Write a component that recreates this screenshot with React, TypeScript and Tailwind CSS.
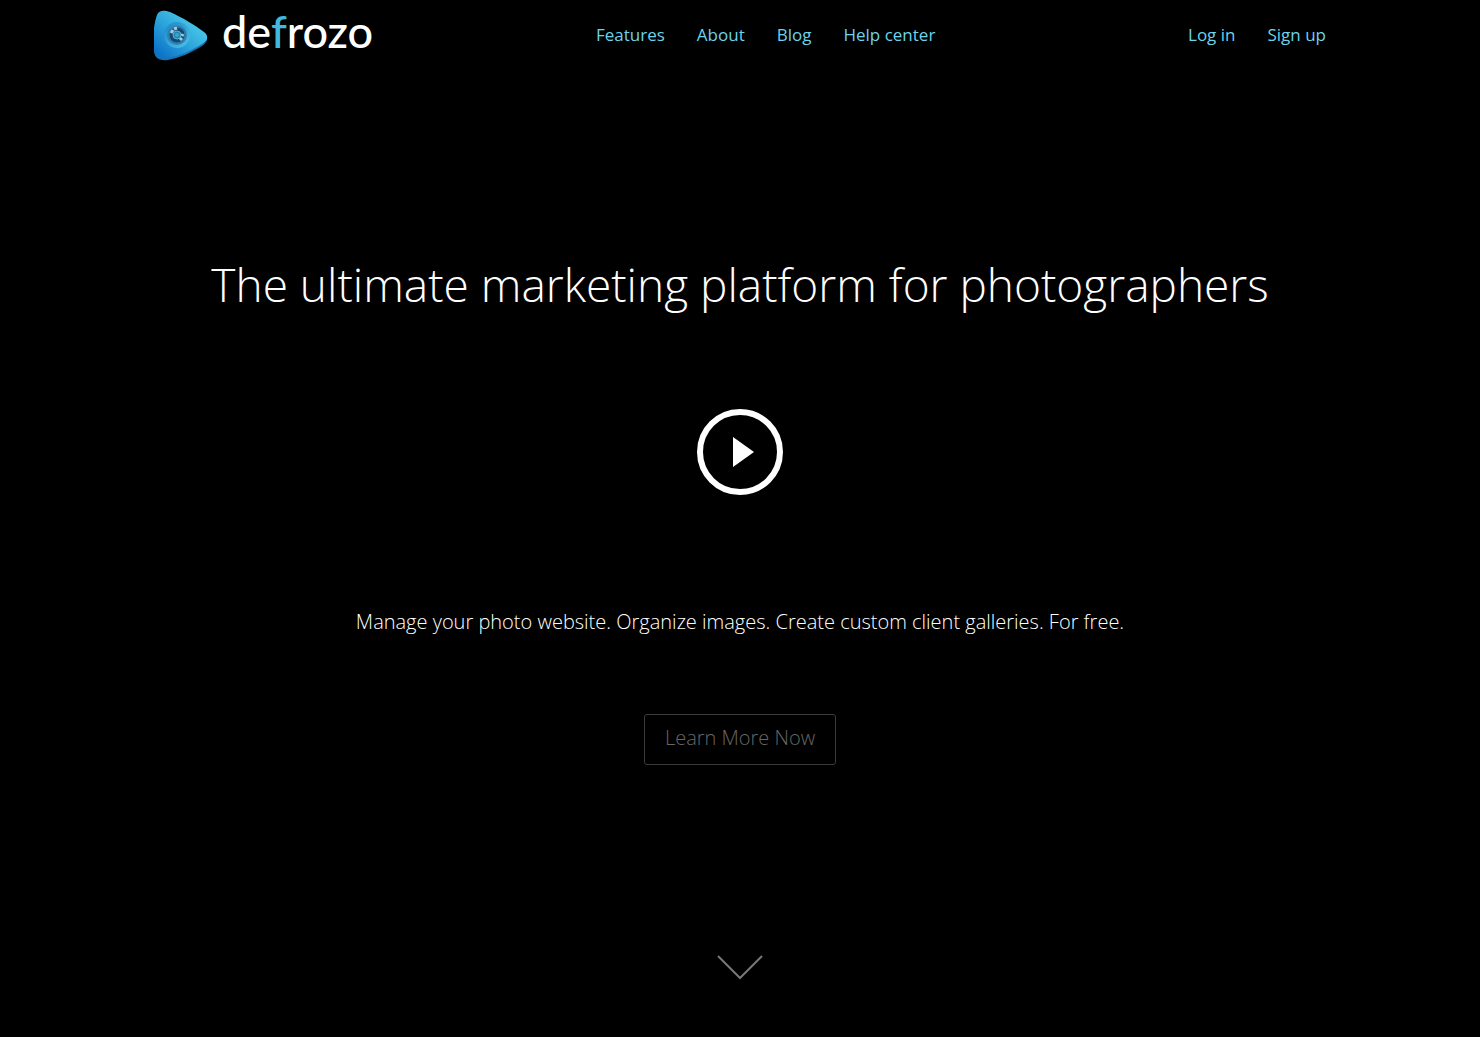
import React from 'react';

const menu = [
    { title: 'Features', url: '#features' },
    { title: 'About', url: '#about' },
    { title: 'Blog', url: '#blog' },
    { title: 'Help center', url: '#help' },
];

const LogoMark = () => (
    <svg width="56" height="52" viewBox="1 -1 56 52" className="block shrink-0" aria-hidden="true">
        <defs>
            <linearGradient id="face" x1="0.1" y1="0.9" x2="0.8" y2="0.2">
                <stop offset="0" stopColor="#0d74c8" />
                <stop offset="0.5" stopColor="#2ba3da" />
                <stop offset="1" stopColor="#4cc9ea" />
            </linearGradient>
            <linearGradient id="ring" x1="0" y1="0" x2="1" y2="1">
                <stop offset="0" stopColor="#1b86c8" />
                <stop offset="1" stopColor="#4fc3e8" />
            </linearGradient>
        </defs>
        <path d="M1 40C0 27 1 14 4 6C6 1 11 0 17 3C30 9 42 16 51 23C56 27 55 32 49 36C38 43 26 48 15 50C6 51 1 48 1 40Z" fill="#1672b0" />
        <path d="M1 38C0 25 1 13 4 5C6 0 11 0 17 2C30 8 42 15 51 22C56 26 55 30 49 34C38 41 26 46 15 48C6 49 1 46 1 38Z" fill="url(#face)" />
        <circle cx="24" cy="25" r="13" fill="url(#ring)" />
        <circle cx="24" cy="25" r="10" fill="#2a83b8" />
        <circle cx="24" cy="25" r="8" fill="#134a72" stroke="#2f7dab" />
        <circle cx="24" cy="25" r="4" fill="#2585b0" stroke="#4fb2d4" />
        <path d="M18 23L20 20M21 19L24 18M27 30L29 28M29 26L30 24" stroke="#a3cbdc" strokeWidth="3" />
        <circle cx="24" cy="25" r="2" fill="#3da4c8" />
    </svg>
);

const Header = () => {
    return (
        <header className="w-full max-w-[1172px] h-[70px] mx-auto flex items-center text-[17px] leading-6 text-[#6dd3ea]">
            <div className="w-[442px]">
                <a href="#home" aria-label="defrozo" className="inline-flex items-center gap-3 align-top text-white">
                    <LogoMark />
                    <span className="font-['Lato',sans-serif] font-medium text-[45px] leading-[56px] pb-2">
                        de<span className="text-[#40b8e0]">f</span>rozo
                    </span>
                </a>
            </div>
            <nav>
                <ul className="flex gap-8">
                    {menu.map((item) => (
                        <li key={item.title}>
                            <a href={item.url}>{item.title}</a>
                        </li>
                    ))}
                </ul>
            </nav>
            <div className="ml-auto flex gap-8">
                <a href="#login">Log in</a>
                <a href="#signup">Sign up</a>
            </div>
        </header>
    );
};

const App = () => {
    return (
        <div className="min-h-screen bg-black text-white font-['Open_Sans',sans-serif]">
            <Header />
            <main className="flex flex-col items-center text-center pt-[178px] pb-14">
                <h1 className="text-[46px] leading-[72px] font-light">
                    The ultimate marketing platform for photographers
                </h1>
                <button
                    aria-label="Play video"
                    className="mt-[89px] size-[86px] rounded-full border-6 border-white flex items-center justify-center pl-[7px]"
                >
                    <svg width="21" height="30" viewBox="0 0 21 30" fill="currentColor">
                        <path d="M0 0L21 15L0 30Z" />
                    </svg>
                </button>
                <p className="mt-28 text-[20px] leading-[30px] font-light">
                    Manage your photo website. Organize images. Create custom client galleries. For free.
                </p>
                <button className="mt-[77px] h-[51px] px-5 pb-1 border border-[#3b3b3b] rounded-[3px] text-[20px] leading-[30px] font-light text-[#666]">
                    Learn More Now
                </button>
                <a href="#features" aria-label="Scroll down" className="mt-[190px] text-[#777]">
                    <svg width="46" height="25" viewBox="0 0 46 25" fill="none" stroke="currentColor" strokeWidth="2">
                        <path d="M1 1L23 23L45 1" />
                    </svg>
                </a>
            </main>
        </div>
    );
};

export default App;
